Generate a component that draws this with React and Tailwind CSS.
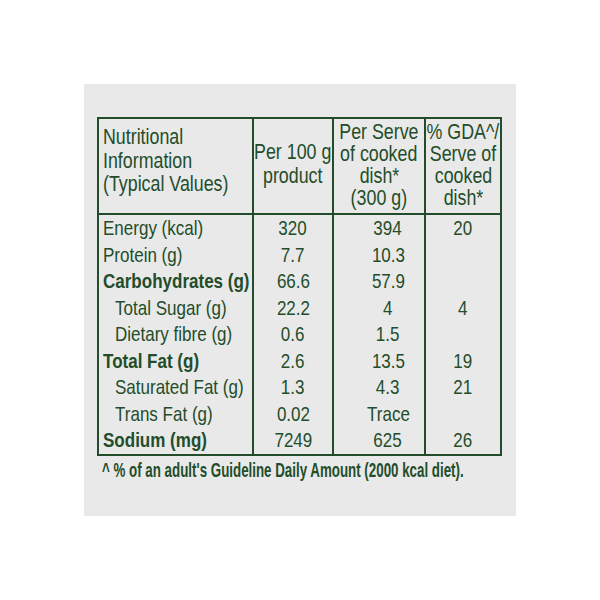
import React from "react";

const rows = [
  { label: "Energy (kcal)", a: "320", b: "394", c: "20" },
  { label: "Protein (g)", a: "7.7", b: "10.3", c: "" },
  { label: "Carbohydrates (g)", a: "66.6", b: "57.9", c: "", bold: true },
  { label: "Total Sugar (g)", a: "22.2", b: "4", c: "4", indent: true },
  { label: "Dietary fibre (g)", a: "0.6", b: "1.5", c: "", indent: true },
  { label: "Total Fat (g)", a: "2.6", b: "13.5", c: "19", bold: true },
  { label: "Saturated Fat (g)", a: "1.3", b: "4.3", c: "21", indent: true },
  { label: "Trans Fat (g)", a: "0.02", b: "Trace", c: "", indent: true },
  { label: "Sodium (mg)", a: "7249", b: "625", c: "26", bold: true },
];

function L({ children }) {
  return <span className="inline-block whitespace-nowrap scale-x-[0.81] origin-left">{children}</span>;
}
function C({ children }) {
  return <span className="inline-block whitespace-nowrap scale-x-[0.81] origin-center">{children}</span>;
}

export default function App() {
  return (
    <div
      className="w-[600px] h-[600px] bg-white p-[84px] overflow-hidden"
      style={{ fontFamily: '"Liberation Sans", Arial, sans-serif' }}
    >
      <div className="w-[432px] h-[432px] bg-[#e9e9e9] pl-[13px] pt-[33px] text-[#234d2a]">
        <div className="w-[405px] border-2 border-[#234d2a]">
          <div className="grid grid-cols-[153px_80px_92px_76px] h-[96px] border-b-2 border-[#234d2a] text-[22px]">
            <div className="pl-[4px] pt-[6px] leading-[23.5px]">
              <div><L>Nutritional</L></div>
              <div><L>Information</L></div>
              <div><L>(Typical Values)</L></div>
            </div>
            <div className="border-l-2 border-[#234d2a] flex flex-col justify-center items-center text-center leading-[24px] pb-[4px]">
              <div><C>Per 100 g</C></div>
              <div><C>product</C></div>
            </div>
            <div className="border-l-2 border-[#234d2a] flex flex-col justify-center items-center text-center leading-[22px] pb-[2px]">
              <div><C>Per Serve</C></div>
              <div><C>of cooked</C></div>
              <div><C>dish*</C></div>
              <div><C>(300 g)</C></div>
            </div>
            <div className="border-l-2 border-[#234d2a] flex flex-col justify-center items-center text-center leading-[22px] pb-[2px]">
              <div><C>% GDA^/</C></div>
              <div><C>Serve of</C></div>
              <div><C>cooked</C></div>
              <div><C>dish*</C></div>
            </div>
          </div>
          <div className="grid grid-cols-[153px_80px_92px_76px] text-[21px] leading-[26.55px]">
            <div className="pl-[4px]">
              {rows.map((r) => (
                <div
                  key={r.label}
                  className={(r.bold ? "font-bold " : "") + (r.indent ? "pl-[12px] " : "") + "whitespace-nowrap h-[26.55px]"}
                >
                  <L>{r.label}</L>
                </div>
              ))}
            </div>
            <div className="border-l-2 border-[#234d2a] text-center">
              {rows.map((r) => (
                <div key={r.label} className="h-[26.55px]"><C>{r.a}</C></div>
              ))}
            </div>
            <div className="border-l-2 border-[#234d2a] text-center pl-[18px]">
              {rows.map((r) => (
                <div key={r.label} className="h-[26.55px]"><C>{r.b}</C></div>
              ))}
            </div>
            <div className="border-l-2 border-[#234d2a] text-center">
              {rows.map((r) => (
                <div key={r.label} className="h-[26.55px]"><C>{r.c}</C></div>
              ))}
            </div>
          </div>
        </div>
        <div className="pl-[5px] pt-[1px] text-[21px] font-bold leading-[26px]">
          <span className="inline-block whitespace-nowrap scale-x-[0.635] origin-left">
            ^ % of an adult's Guideline Daily Amount (2000 kcal diet).
          </span>
        </div>
      </div>
    </div>
  );
}
